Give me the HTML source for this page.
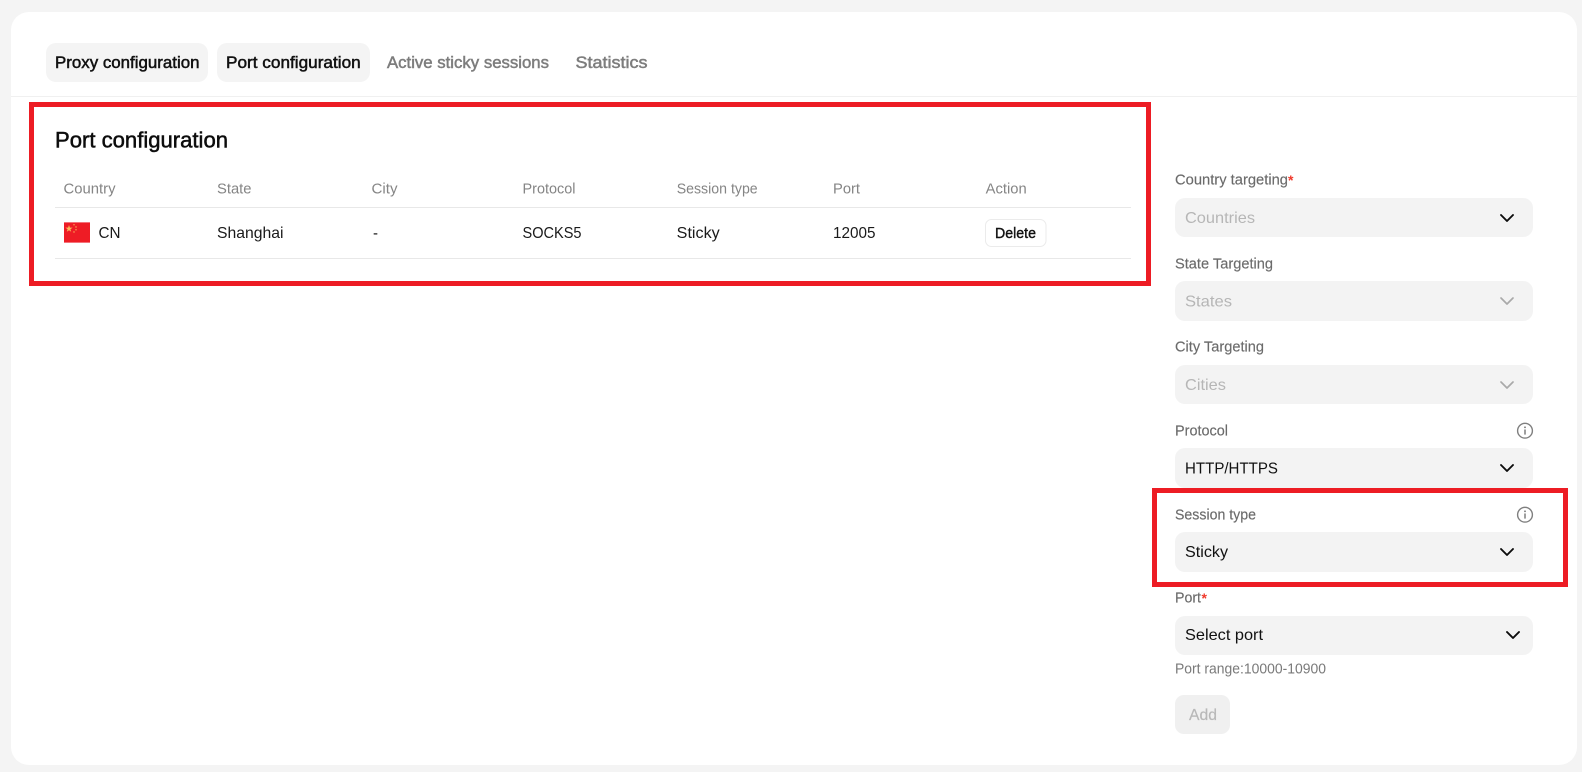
<!DOCTYPE html>
<html lang="en">
<head>
<meta charset="utf-8">
<title>Port configuration</title>
<style>
html,body{margin:0;padding:0;width:1582px;height:772px;overflow:hidden;background:#f4f4f4}
svg{display:block;position:absolute;left:0;top:0}
text{font-family:"Liberation Sans",sans-serif;font-size:14px;white-space:pre}
.tab{font-size:16.5px;stroke-width:.5px}
.on{fill:#111;stroke:#111}
.off{fill:#7d7d7d;stroke:#7d7d7d}
.title{font-size:22px;fill:#0c0c0c;stroke:#0c0c0c;stroke-width:.5px}
.th{font-size:14.5px;fill:#858585}
.td{font-size:16px;fill:#1a1a1a}
.lb{font-size:14.5px;fill:#6b6b6b;stroke:#6b6b6b;stroke-width:.15px}
.ph{font-size:16px;fill:#b6b6b6}
.val{font-size:16px;fill:#111}
.chev{fill:none;stroke:#0c0c0c;stroke-width:1.9;stroke-linecap:round;stroke-linejoin:round}
.chev.dim{stroke:#a9a9a9;stroke-width:1.7}
.sel{fill:#f3f3f3}
.star{font-size:14px;font-weight:bold;fill:#f0392b}
</style>
</head>
<body>
<svg width="1582" height="772" viewBox="0 0 1582 772" xmlns="http://www.w3.org/2000/svg">
  <rect x="11" y="12" width="1566" height="753" rx="18" fill="#fff"/>
  <rect x="11" y="96" width="1566" height="1" fill="#f0f0f0"/>

  <rect x="46" y="43" width="162" height="39" rx="10" fill="#f4f4f4"/>
  <rect x="217" y="43" width="153" height="39" rx="10" fill="#f4f4f4"/>
  <text class="tab on" x="55" y="68" textLength="144.5" lengthAdjust="spacingAndGlyphs">Proxy configuration</text>
  <text class="tab on" x="226" y="68" textLength="134.7" lengthAdjust="spacingAndGlyphs">Port configuration</text>
  <text class="tab off" x="387" y="68" textLength="162" lengthAdjust="spacingAndGlyphs">Active sticky sessions</text>
  <text class="tab off" x="575.5" y="68" textLength="72" lengthAdjust="spacingAndGlyphs">Statistics</text>

  <text class="title" x="55" y="147.5" textLength="173" lengthAdjust="spacingAndGlyphs">Port configuration</text>

  <text class="th" x="63.5" y="193.5" textLength="52" lengthAdjust="spacingAndGlyphs">Country</text>
  <text class="th" x="217" y="193.5" textLength="34.5" lengthAdjust="spacingAndGlyphs">State</text>
  <text class="th" x="371.5" y="193.5" textLength="26" lengthAdjust="spacingAndGlyphs">City</text>
  <text class="th" x="522.5" y="193.5" textLength="53" lengthAdjust="spacingAndGlyphs">Protocol</text>
  <text class="th" x="676.7" y="193.5" textLength="81" lengthAdjust="spacingAndGlyphs">Session type</text>
  <text class="th" x="833" y="193.5" textLength="27" lengthAdjust="spacingAndGlyphs">Port</text>
  <text class="th" x="985.7" y="193.5" textLength="41" lengthAdjust="spacingAndGlyphs">Action</text>

  <rect x="55" y="207" width="1076" height="1" fill="#e8e8e8"/>
  <rect x="55" y="258" width="1076" height="1" fill="#e8e8e8"/>

  <rect x="64" y="222" width="26" height="21" fill="#ee1c25"/>
  <rect x="64" y="222" width="26" height="1" fill="#f4727a"/>
  <rect x="64" y="242" width="26" height="1" fill="#f4727a"/>
  <polygon points="69,225 69.9,227.6 72.6,227.6 70.4,229.2 71.2,231.8 69,230.2 66.8,231.8 67.6,229.2 65.4,227.6 68.1,227.6" fill="#f9b95a"/>
  <circle cx="74" cy="224.8" r=".7" fill="#f9b95a"/>
  <circle cx="76" cy="227" r=".7" fill="#f9b95a"/>
  <circle cx="76" cy="229.8" r=".7" fill="#f9b95a"/>
  <circle cx="74" cy="232" r=".7" fill="#f9b95a"/>

  <text class="td" x="98.5" y="238" textLength="22" lengthAdjust="spacingAndGlyphs">CN</text>
  <text class="td" x="217" y="238" textLength="66.5" lengthAdjust="spacingAndGlyphs">Shanghai</text>
  <text class="td" x="373" y="238" textLength="5" lengthAdjust="spacingAndGlyphs">-</text>
  <text class="td" x="522.5" y="238" textLength="59" lengthAdjust="spacingAndGlyphs">SOCKS5</text>
  <text class="td" x="676.7" y="238" textLength="43" lengthAdjust="spacingAndGlyphs">Sticky</text>
  <text class="td" x="833" y="238" textLength="42.5" lengthAdjust="spacingAndGlyphs">12005</text>

  <rect x="985.5" y="219.5" width="60.5" height="27" rx="6" fill="#fff" stroke="#ebebeb"/>
  <text x="995" y="238" textLength="41" lengthAdjust="spacingAndGlyphs" style="font-size:14.5px;fill:#111;stroke:#111;stroke-width:.4px">Delete</text>

  <text class="lb" x="1175" y="184.5" textLength="113" lengthAdjust="spacingAndGlyphs">Country targeting</text>
  <text class="star" x="1288" y="185">*</text>
  <rect class="sel" x="1175" y="198" width="358" height="39" rx="10"/>
  <text class="ph" x="1185" y="223" textLength="70" lengthAdjust="spacingAndGlyphs">Countries</text>
  <path class="chev" d="M1501 215 L1507 221 L1513 215"/>

  <text class="lb" x="1175" y="268.5" textLength="98" lengthAdjust="spacingAndGlyphs">State Targeting</text>
  <rect class="sel" x="1175" y="281" width="358" height="40" rx="10"/>
  <text class="ph" x="1185" y="306.5" textLength="47" lengthAdjust="spacingAndGlyphs">States</text>
  <path class="chev dim" d="M1501 298 L1507 304 L1513 298"/>

  <text class="lb" x="1175" y="351.5" textLength="89" lengthAdjust="spacingAndGlyphs">City Targeting</text>
  <rect class="sel" x="1175" y="365" width="358" height="39" rx="10"/>
  <text class="ph" x="1185" y="390" textLength="41" lengthAdjust="spacingAndGlyphs">Cities</text>
  <path class="chev dim" d="M1501 382 L1507 388 L1513 382"/>

  <text class="lb" x="1175" y="435.5" textLength="53" lengthAdjust="spacingAndGlyphs">Protocol</text>
  <g fill="none" stroke="#7f7f7f" stroke-width="1.4">
    <circle cx="1525" cy="430.7" r="7.4"/>
    <circle cx="1525" cy="514.7" r="7.4"/>
  </g>
  <path d="M1525 430V434M1525 514V518" stroke="#7f7f7f" stroke-width="1.5" stroke-linecap="round"/>
  <circle cx="1525" cy="427.3" r=".95" fill="#7f7f7f"/>
  <circle cx="1525" cy="511.3" r=".95" fill="#7f7f7f"/>
  <rect class="sel" x="1175" y="448" width="358" height="40" rx="10"/>
  <text class="val" x="1185" y="473.5" textLength="93" lengthAdjust="spacingAndGlyphs">HTTP/HTTPS</text>
  <path class="chev" d="M1501 465 L1507 471 L1513 465"/>

  <text class="lb" x="1175" y="519.5" textLength="81" lengthAdjust="spacingAndGlyphs">Session type</text>
  <rect class="sel" x="1175" y="532" width="358" height="40" rx="10"/>
  <text class="val" x="1185" y="557" textLength="43" lengthAdjust="spacingAndGlyphs">Sticky</text>
  <path class="chev" d="M1501 549 L1507 555 L1513 549"/>

  <text class="lb" x="1175" y="602.5" textLength="26" lengthAdjust="spacingAndGlyphs">Port</text>
  <text class="star" x="1201.5" y="603">*</text>
  <rect class="sel" x="1175" y="616" width="358" height="39" rx="10"/>
  <text class="val" x="1185" y="640" textLength="78" lengthAdjust="spacingAndGlyphs">Select port</text>
  <path class="chev" d="M1507 632 L1513 638 L1519 632"/>

  <text x="1175" y="673.5" textLength="151" lengthAdjust="spacingAndGlyphs" style="font-size:14.5px;fill:#7a7a7a">Port range:10000-10900</text>

  <rect x="1175" y="695" width="55" height="39" rx="9" fill="#f0f0f0"/>
  <text x="1189" y="720" textLength="28" lengthAdjust="spacingAndGlyphs" style="font-size:16px;fill:#b8b8b8;stroke:#b8b8b8;stroke-width:.2px">Add</text>

  <rect x="31.5" y="104.5" width="1117" height="179" fill="none" stroke="#ed1c24" stroke-width="5"/>
  <rect x="1154.5" y="490.5" width="411" height="94" fill="none" stroke="#ed1c24" stroke-width="5"/>
</svg>
</body>
</html>
